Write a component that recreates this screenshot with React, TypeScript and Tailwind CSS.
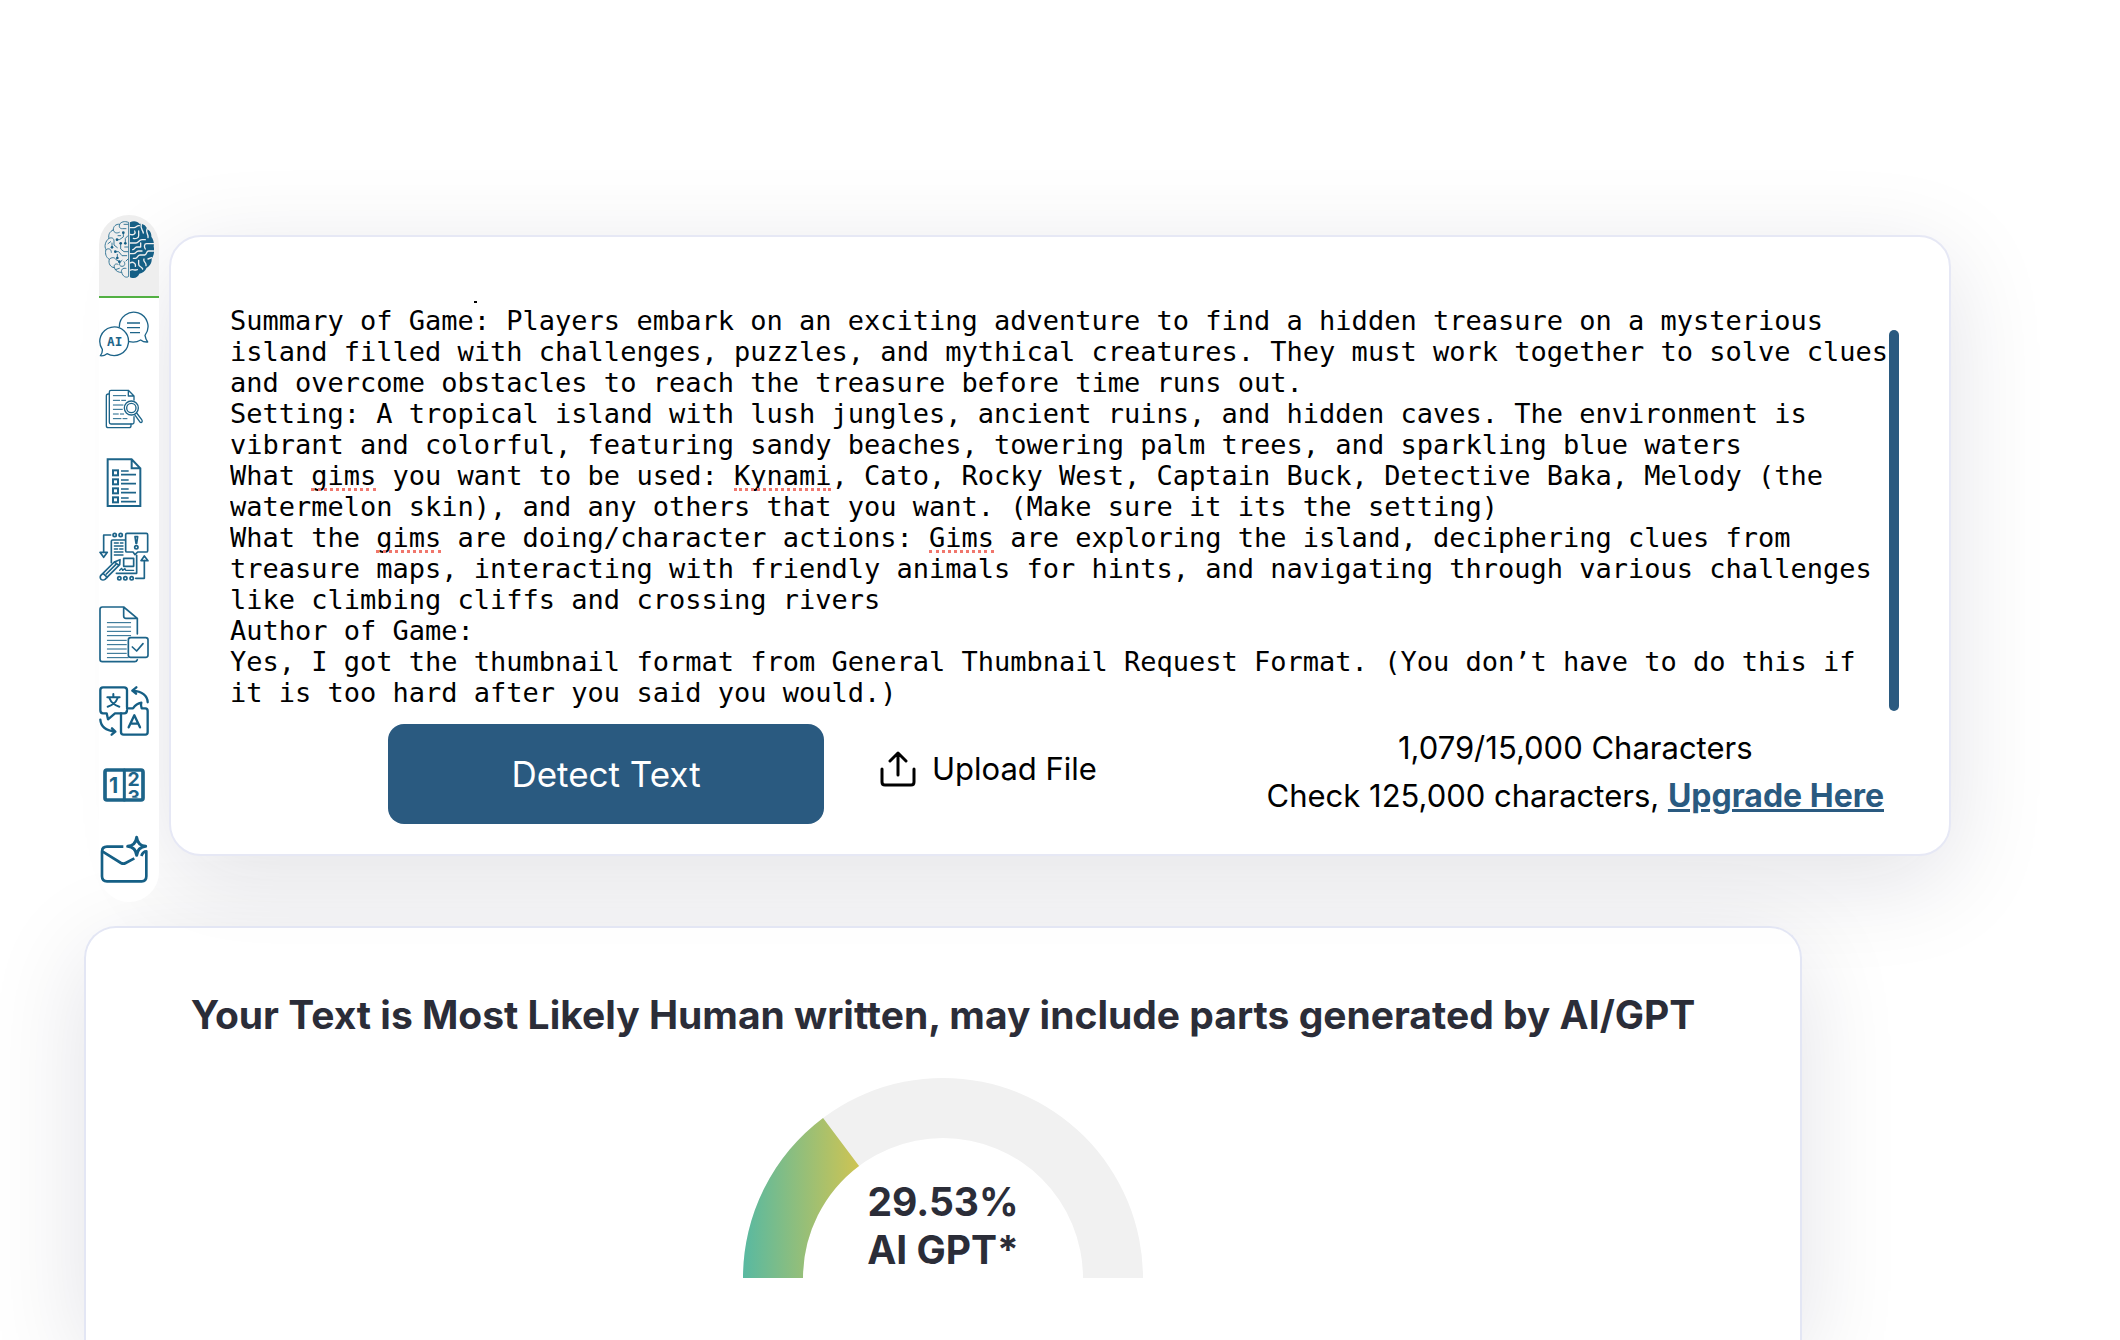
import React, { useState } from 'react';

const INITIAL_TEXT = `Summary of Game: Players embark on an exciting adventure to find a hidden treasure on a mysterious island filled with challenges, puzzles, and mythical creatures. They must work together to solve clues and overcome obstacles to reach the treasure before time runs out.
Setting: A tropical island with lush jungles, ancient ruins, and hidden caves. The environment is vibrant and colorful, featuring sandy beaches, towering palm trees, and sparkling blue waters
What gims you want to be used: Kynami, Cato, Rocky West, Captain Buck, Detective Baka, Melody (the watermelon skin), and any others that you want. (Make sure it its the setting)
What the gims are doing/character actions: Gims are exploring the island, deciphering clues from treasure maps, interacting with friendly animals for hints, and navigating through various challenges like climbing cliffs and crossing rivers
Author of Game:
Yes, I got the thumbnail format from General Thumbnail Request Format. (You don’t have to do this if it is too hard after you said you would.)`;

const LINE_HEIGHT = 31;

// Spelling marks, in character cells of the monospaced text
const SPELLING_MARKS = [
    { row: 5, col: 5, length: 4 },
    { row: 5, col: 31, length: 6 },
    { row: 7, col: 9, length: 4 },
    { row: 7, col: 43, length: 4 },
];

const BrainIcon = () => (
    <svg viewBox="0 0 150 171" className="w-[50px] h-[57px]" fill="none" strokeLinecap="round" strokeLinejoin="round">
        <g stroke="#3a7a99" strokeWidth="3">
            <path d="M73 4 C62 -1 50 3 47 10 C36 8 27 17 28 27 C17 31 12 42 15 52 C4 60 0 76 6 86 C2 98 7 110 16 115 C12 128 20 139 31 140 C34 150 44 155 53 154 C56 166 66 172 73 167 Z" />
            <path d="M47 10 C43 18 48 24 56 23 H66 M28 27 C30 36 38 38 46 34 M15 52 C24 48 30 52 30 60 V72 L40 80 M6 86 C14 80 22 84 22 94 M16 115 C22 108 32 108 36 116 L46 122 M31 140 C28 132 34 126 42 130 M53 154 C50 146 56 140 66 142" />
            <path d="M60 10 H72 M58 36 V48 L46 56 H38 M72 44 L64 52 V66 M50 68 V84 L60 92 H72 M34 92 H44 L54 104 H68 M40 100 V110 M24 66 V78 M72 78 H62 M54 118 C44 124 44 136 54 136 C64 136 64 126 60 122 M72 114 L66 120 M42 44 H50 M34 146 L46 142 M12 68 L20 62" />
        </g>
        <g fill="#155f85">
            <circle cx="39" cy="56" r="4" />
            <circle cx="50" cy="67" r="4" />
            <circle cx="34" cy="92" r="4" />
            <circle cx="64" cy="67" r="4" />
            <circle cx="40" cy="111" r="4" />
            <circle cx="58" cy="35" r="4" />
            <circle cx="24" cy="79" r="4" />
            <circle cx="46" cy="122" r="4" />
        </g>
        <path
            fill="#155f85"
            d="M78 4 C88 -2 102 1 106 8 C118 7 128 15 129 24 C138 28 143 38 142 47 C149 56 151 68 149 76 C152 90 150 104 143 113 C144 126 137 136 128 140 C124 150 116 156 106 158 C102 170 88 174 78 169 Z"
        />
        <g stroke="#efefef" strokeWidth="4">
            <path d="M78 20 H90 C98 20 98 12 106 14 M112 8 C108 24 116 26 118 36 M78 40 C90 44 96 36 92 30 M104 30 V44 C104 52 94 54 88 52 M129 24 C124 36 134 38 132 50" />
            <path d="M78 66 H96 C104 66 104 56 114 56 H124 M110 66 V78 H98 C92 78 92 86 86 86 M149 68 H128 C120 68 120 78 124 84 M78 98 H88 C98 98 94 90 104 90 H114" />
            <path d="M149 90 H134 C126 90 130 100 122 102 H108 C100 102 102 112 94 112 H88 M78 126 C88 120 96 128 94 136 M104 118 V130 C104 138 114 136 116 144 M120 114 C116 122 128 124 126 134 M143 110 L132 114 M78 148 C86 142 92 150 100 146" />
        </g>
    </svg>
);

const IconFrame: React.FC<{ children: React.ReactNode; tall?: boolean }> = ({ children, tall }) => (
    <svg
        viewBox={tall ? '0 0 150 171' : '0 0 150 150'}
        className={tall ? 'w-[50px] h-[57px]' : 'size-[50px]'}
        fill="none"
        stroke="#1d6489"
        strokeWidth="5"
        strokeLinecap="round"
        strokeLinejoin="round"
    >
        {children}
    </svg>
);

const ChatIcon = () => (
    <IconFrame>
        <path d="M61 50 A43 43 0 1 1 138 76 Q140 88 146 96 Q134 97 125 90 Q110 99 91 95" strokeWidth="4" />
        <path d="M10 118 A43 43 0 1 1 24 131 Q14 139 4 137 Q11 130 10 118 Z" strokeWidth="4" />
        <path d="M84 39 H123 M84 53 H123 M93 68 H123" strokeWidth="4" strokeLinecap="butt" />
        <text x="47" y="109" textAnchor="middle" fontSize="38" fontWeight="700" fill="#1d6489" stroke="none" fontFamily="DejaVu Sans Mono, monospace">AI</text>
    </IconFrame>
);

const SearchDocIcon = () => (
    <IconFrame>
        <path d="M105 48 V36 L88 19 H36 Q31 19 31 24 V115 Q31 120 36 120 H100 Q105 120 105 115 V98 M88 19 V36 H105" strokeWidth="4" />
        <path d="M31 30 H28 Q22 30 22 36 V125 Q22 131 28 131 H90 Q96 131 96 125 V120" strokeWidth="4" />
        <path d="M43 35 H80 M43 49 H62 M68 49 H80 M43 63 H72 M43 76 H70 M43 90 H58 M64 90 H74 M43 104 H66 M72 104 H84" strokeWidth="3" />
        <circle cx="97" cy="72" r="21" fill="#fff" strokeWidth="4" />
        <circle cx="97" cy="72" r="14" strokeWidth="4" />
        <path d="M107 92 L122 113 Q126 117 129 114 Q131 111 128 107 L113 87" strokeWidth="4" />
    </IconFrame>
);

const ChecklistIcon = () => (
    <IconFrame>
        <path d="M98 4 H26 V144 H124 V31 Z M98 4 V31 H124" strokeWidth="6" strokeLinejoin="miter" />
        {[37, 64, 91, 118].map(y => (
            <g key={y} strokeWidth="6" strokeLinecap="butt" strokeLinejoin="miter">
                <rect x="42" y={y} width="15" height="15" />
                <path d={`M66 ${y + 2} H89 M66 ${y + 13} H111`} strokeWidth="5" />
            </g>
        ))}
    </IconFrame>
);

const SketchIcon = () => (
    <IconFrame>
        <path d="M35 9 H14 V61 M110 139 H136 V86" />
        <path d="M3 61 H25 L14 76 Z M126 86 H147 L136 72 Z" />
        <circle cx="47" cy="9" r="5" />
        <circle cx="65" cy="9" r="5" />
        <circle cx="61" cy="139" r="5" />
        <circle cx="79" cy="139" r="5" />
        <circle cx="98" cy="139" r="5" />
        <path d="M78 24 H41 Q37 24 37 28 V92 M113 70 V124 H52" />
        <path d="M84 4 H142 Q146 4 146 8 V56 Q146 60 142 60 H116 L108 68 L102 60 H84 Q80 60 80 56 V8 Q80 4 84 4 Z" />
        <path d="M108 14 H116 L113 34 H111 Z" />
        <circle cx="112" cy="46" r="5" />
        <path d="M46 33 H58 M64 33 H72 M46 42 H72 M46 51 H56 M62 51 H72 M46 60 H72 M46 69 H72" strokeWidth="4" />
        <rect x="74" y="79" width="30" height="24" />
        <path d="M62 115 L68 109 L71 115 L78 110 L80 115 H104" strokeWidth="4" />
        <path d="M5 131 L46 90 L63 83 L62 98 L18 142 Q12 146 6 142 Q2 137 5 131 Z M12 124 L25 136 M46 90 L60 100 M22 126 L50 98" fill="#fff" />
    </IconFrame>
);

const DocCheckIcon = () => (
    <IconFrame tall>
        <path d="M115 84 V37 L74 3 H10 Q3 3 3 10 V160 Q3 167 10 167 H107 Q113 167 115 161 M74 3 V30 Q74 37 81 37 H115" />
        <path d="M25 50 H95 M25 63 H95 M25 76 H95 M25 89 H95 M25 103 H82 M25 116 H82 M25 129 H82 M25 142 H82 M25 155 H88" strokeWidth="3" />
        <rect x="88" y="95" width="59" height="59" rx="7" />
        <path d="M100 123 L113 135 L132 113" />
    </IconFrame>
);

const TranslateIcon = () => (
    <IconFrame>
        <g strokeWidth="7" stroke="#155f85">
            <path d="M66 82 H48 L27 100 L23 82 H12 Q4 82 4 73 V12 Q4 4 12 4 H75 Q84 4 84 12 V64" />
            <path d="M84 67 H102 Q112 53 127 50 Q124 58 128 67 H139 Q146 67 146 75 V138 Q146 146 139 146 H74 Q66 146 66 138 V82 H76 Q84 82 84 73" />
            <path d="M146 49 Q145 18 100 14 M112 4 L100 14 L111 23 M4 101 Q6 132 49 137 M39 127 L49 137 L38 146" />
            <path d="M89 124 L106 88 L123 124 M95 113 H117" />
            <path d="M43 24 V32 M25 34 H62 M56 36 Q48 56 26 62 M31 36 Q39 56 61 62" strokeWidth="6" />
        </g>
    </IconFrame>
);

const CounterIcon = () => (
    <IconFrame>
        <clipPath id="counter-window">
            <rect x="80" y="36" width="50" height="77" />
        </clipPath>
        <rect x="18" y="30" width="114" height="90" rx="6" strokeWidth="11" />
        <path d="M76 30 V120" strokeWidth="9" />
        <g fill="#1d6489" stroke="none" fontFamily="Inter, sans-serif" fontWeight="700" fontSize="64" textAnchor="middle">
            <text x="44" y="99">1</text>
            <g clipPath="url(#counter-window)" fontSize="58">
                <text x="104" y="77">2</text>
                <text x="104" y="131">3</text>
            </g>
        </g>
    </IconFrame>
);

const MailIcon = () => (
    <IconFrame>
        <g strokeWidth="8" stroke="#155f85" strokeLinecap="butt">
            <path d="M73 38 H24 Q9 38 9 53 V127 Q9 142 24 142 H128 Q142 142 142 127 V52 Q132 52 127 66" />
            <path d="M10 52 L66 87 Q73 91 80 87 L106 73" />
            <path d="M113 10 Q116 34 140 37 Q116 40 113 64 Q110 40 86 37 Q110 34 113 10 Z" strokeWidth="9" />
        </g>
    </IconFrame>
);

const TOOLS = [
    { label: 'AI chat', icon: <ChatIcon />, tall: false },
    { label: 'Plagiarism checker', icon: <SearchDocIcon />, tall: false },
    { label: 'Summarizer', icon: <ChecklistIcon />, tall: false },
    { label: 'Paraphraser', icon: <SketchIcon />, tall: false },
    { label: 'Grammar checker', icon: <DocCheckIcon />, tall: true },
    { label: 'Translator', icon: <TranslateIcon />, tall: false },
    { label: 'Word counter', icon: <CounterIcon />, tall: false },
    { label: 'Email helper', icon: <MailIcon />, tall: false },
];

const ToolRail = () => (
    <nav className="w-[60px] shrink-0 flex flex-col pb-1.5 bg-white rounded-full overflow-hidden">
        <button aria-label="AI detector" className="h-[83px] pt-1.5 flex justify-center items-start bg-[#eeeeee] border-b-2 border-[#52b043]">
            <BrainIcon />
        </button>
        {TOOLS.map(tool => (
            <button key={tool.label} aria-label={tool.label} className={`flex items-center ${tool.tall ? 'h-20' : 'h-[74px]'}`}>
                {tool.icon}
            </button>
        ))}
    </nav>
);

const UploadIcon = () => (
    <svg viewBox="0 0 36 36" className="size-9" fill="none" stroke="#000" strokeWidth="3" strokeLinecap="round" strokeLinejoin="round">
        <path d="M2 18 V31 Q2 34 5 34 H31 Q34 34 34 31 V18" />
        <path d="M18 24 V2 M10 10 L18 2 L26 10" />
    </svg>
);

const DetectorCard = () => {
    const [text, setText] = useState(INITIAL_TEXT);

    return (
        <section className="relative flex-1 min-w-0 mt-5 h-[621px] pt-[68px] bg-white border-2 border-[#e6e8f5] rounded-[32px] shadow-[0_24px_100px_rgba(15,20,50,0.12)]">
            <div className="flex pl-[59px] pr-[50px]">
                <div className="relative flex-1 min-w-0 font-['DejaVu_Sans_Mono',monospace] text-[27px] leading-[31px]">
                    <textarea
                        aria-label="Text to check"
                        spellCheck={false}
                        value={text}
                        onChange={e => setText(e.target.value)}
                        className="block w-full h-[403px] resize-none overflow-hidden bg-transparent text-black outline-none"
                    />
                    {SPELLING_MARKS.map(mark => (
                        <span
                            key={`${mark.row}-${mark.col}`}
                            className="absolute border-b-3 border-dotted border-[#f0766c] pointer-events-none"
                            style={{
                                left: `${mark.col}ch`,
                                width: `${mark.length}ch`,
                                top: mark.row * LINE_HEIGHT,
                                height: LINE_HEIGHT,
                            }}
                        />
                    ))}
                    {/* Tail of the line scrolled out above */}
                    <span className="absolute left-[15ch] -top-1 w-[3px] h-0.5 bg-black" />
                </div>
                <div className="w-2.5 h-[381px] mt-[25px] rounded-full bg-[#2a5a80]" />
            </div>

            <div className="flex justify-between items-start pl-[217px] pr-[65px] mt-[13px]">
                <div className="flex items-start gap-14">
                    <button className="w-[436px] h-[100px] rounded-2xl bg-[#2a5a80] text-white text-[35px]">Detect Text</button>
                    <button className="h-[90px] flex items-center gap-4 text-[31px] text-black">
                        <UploadIcon /> Upload File
                    </button>
                </div>
                <div className="text-center text-[31px] leading-[48px] text-black">
                    <p>1,079/15,000 Characters</p>
                    <p>
                        Check 125,000 characters, <a href="#upgrade" className="font-bold text-[32px] text-[#2a5a80] underline decoration-3">Upgrade Here</a>
                    </p>
                </div>
            </div>
        </section>
    );
};

const Gauge: React.FC<{ percent: number }> = ({ percent }) => {
    const angle = (Math.PI * percent) / 100;
    const at = (r: number) => `${200 - r * Math.cos(angle)} ${200 - r * Math.sin(angle)}`;

    return (
        <div className="relative w-[400px] h-[200px]">
            <svg viewBox="0 0 400 200" className="size-full">
                <defs>
                    <linearGradient id="gauge-fill">
                        <stop offset="0" stopColor="#58b9a1" />
                        <stop offset="1" stopColor="#cec453" />
                    </linearGradient>
                </defs>
                <path d="M0 200 A200 200 0 0 1 400 200 H340 A140 140 0 0 0 60 200 Z" fill="#f1f1f1" />
                <path d={`M0 200 A200 200 0 0 1 ${at(200)} L${at(140)} A140 140 0 0 0 60 200 Z`} fill="url(#gauge-fill)" />
            </svg>
            <p className="absolute inset-x-0 bottom-1 text-center text-[39px] leading-[48px] font-bold">
                {percent}%<br />AI GPT*
            </p>
        </div>
    );
};

export default function App() {
    return (
        <div className="h-screen overflow-hidden flex flex-col bg-white pt-[215px] font-['Inter',sans-serif]">
            <main className="contents">
                <div className="flex items-start gap-2.5 pl-[99px] pr-[169px]">
                    <div className="relative z-10">
                        <ToolRail />
                    </div>
                    <DetectorCard />
                </div>

                <section className="relative flex-1 mt-6 ml-[84px] mr-[318px] pt-[59px] flex flex-col items-center bg-white/80 border-2 border-b-0 border-[#e3e6f4] rounded-t-[32px] text-[#2b2d38] shadow-[0_24px_100px_rgba(15,20,50,0.12)]">
                    <h1 className="text-[39px] leading-[56px] font-bold text-center">
                        Your Text is Most Likely Human written, may include parts generated by AI/GPT
                    </h1>
                    <div className="mt-[35px]">
                        <Gauge percent={29.53} />
                    </div>
                </section>
            </main>
        </div>
    );
}
